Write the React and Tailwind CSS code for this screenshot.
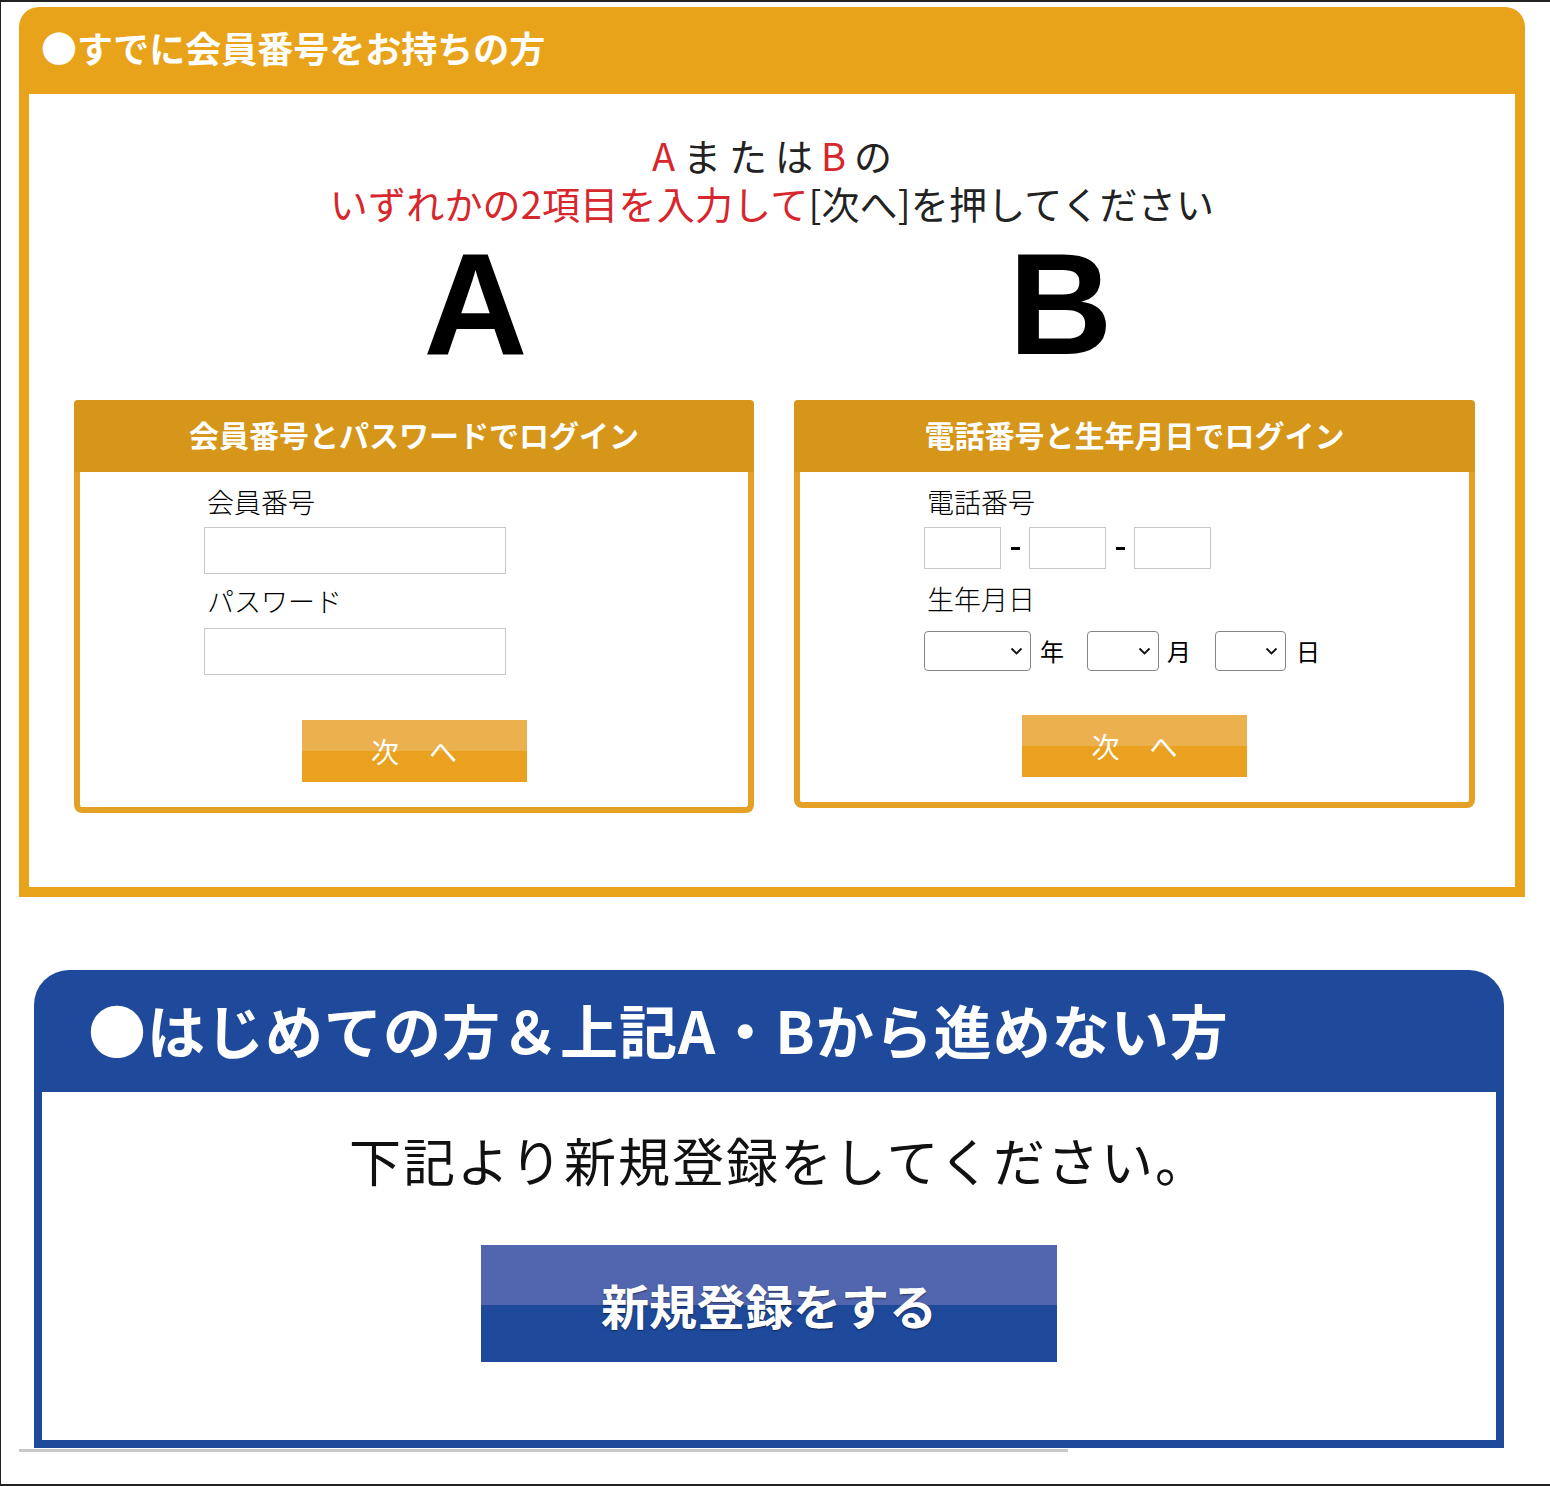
import React from "react";

function Sel({ className }) {
  return (
    <div className={"relative h-[40px] " + className}>
      <select className="block w-full h-full appearance-none border border-[#858585] rounded-[4px] bg-white" />
      <svg
        className="absolute right-[8px] top-[16px] pointer-events-none"
        width="13"
        height="8"
        viewBox="0 0 13 8"
      >
        <path d="M1.5 1.5 L6.5 6.5 L11.5 1.5" stroke="#111" strokeWidth="1.8" fill="none" />
      </svg>
    </div>
  );
}

function NextButton() {
  return (
    <button
      type="button"
      className="mx-auto flex h-[62px] w-[225px] items-center justify-center gap-[30px] bg-[linear-gradient(#ecb14f_50%,#e9a11f_50%)] text-[28px] leading-none text-white"
    >
      <span>次</span>
      <span>へ</span>
    </button>
  );
}

function BoxHeader({ children }) {
  return (
    <div className="flex h-[72px] items-center justify-center rounded-t-[4px] bg-[#d5961a] pb-[5px] text-[30px] font-bold leading-none text-white">
      {children}
    </div>
  );
}

function Dash() {
  return (
    <span className="flex w-[28px] justify-center">
      <span className="block h-[3px] w-[9px] bg-black" />
    </span>
  );
}

export default function App() {
  return (
    <div className="h-[1486px] w-[1550px] overflow-hidden border-b-2 border-l border-t-2 border-[#222] bg-white pl-[18px] pt-[5px] font-['Noto_Sans_CJK_JP','Noto_Sans',sans-serif] text-black">
      {/* Orange section */}
      <section className="w-[1506px]">
        <div className="flex h-[87px] items-center rounded-t-[20px] bg-[#e9a31b] pb-[8px] pl-[22px] text-[36px] font-bold leading-none text-white">
          ●すでに会員番号をお持ちの方
        </div>
        <div className="h-[803px] border-x-[10px] border-b-[10px] border-[#e9a31b] bg-white pt-[37px]">
          <p className="pl-[8px] text-center text-[38px] leading-[48px] tracking-[8px] text-[#222]">
            <span className="text-[#d7262c]">A</span>または<span className="text-[#d7262c]">B</span>の
          </p>
          <p className="text-center text-[38px] leading-[48px] tracking-[0.2px] text-[#222]">
            <span className="text-[#d7262c]">いずれかの2項目を入力して</span>[次へ]を押してください
          </p>
          <div className="mt-[6px] flex justify-center gap-[385px] pr-[8px] font-['Liberation_Sans',Arial,sans-serif] text-[144px] font-bold leading-none">
            <span className="w-[200px] text-center">A</span>
            <span className="w-[200px] text-center">B</span>
          </div>

          <div className="ml-[45px] mt-[23px] flex items-start gap-[40px]">
            {/* Box A */}
            <div className="w-[680px]">
              <BoxHeader>会員番号とパスワードでログイン</BoxHeader>
              <div className="rounded-b-[8px] border-x-[6px] border-b-[6px] border-[#e4a126] bg-white pb-[25px] pt-[12px]">
                <div className="pl-[124px]">
                  <div className="ml-[3px] h-[36px] text-[27px] font-light leading-[36px]">会員番号</div>
                  <input className="mt-[7px] block h-[47px] w-[302px] border border-[#c8c8c8] bg-white" />
                  <div className="ml-[3px] mt-[9px] h-[36px] text-[27px] font-light leading-[36px]">パスワード</div>
                  <input type="password" className="mt-[9px] block h-[47px] w-[302px] border border-[#c8c8c8] bg-white" />
                </div>
                <div className="mt-[45px]">
                  <NextButton />
                </div>
              </div>
            </div>

            {/* Box B */}
            <div className="w-[681px]">
              <BoxHeader>電話番号と生年月日でログイン</BoxHeader>
              <div className="rounded-b-[8px] border-x-[6px] border-b-[6px] border-[#e4a126] bg-white pb-[25px] pt-[12px]">
                <div className="pl-[124px]">
                  <div className="ml-[3px] h-[36px] text-[27px] font-light leading-[36px]">電話番号</div>
                  <div className="mt-[7px] flex h-[42px] items-center">
                    <input className="block h-[42px] w-[77px] border border-[#c8c8c8] bg-white" />
                    <Dash />
                    <input className="block h-[42px] w-[77px] border border-[#c8c8c8] bg-white" />
                    <Dash />
                    <input className="block h-[42px] w-[77px] border border-[#c8c8c8] bg-white" />
                  </div>
                  <div className="ml-[3px] mt-[12px] h-[36px] text-[27px] font-light leading-[36px]">生年月日</div>
                  <div className="mt-[14px] flex h-[40px] items-center text-[24px] leading-none">
                    <Sel className="w-[107px]" />
                    <span className="ml-[9px] w-[47px]">年</span>
                    <Sel className="w-[72px]" />
                    <span className="ml-[8px] w-[48px]">月</span>
                    <Sel className="w-[71px]" />
                    <span className="ml-[10px]">日</span>
                  </div>
                </div>
                <div className="mt-[44px]">
                  <NextButton />
                </div>
              </div>
            </div>
          </div>
        </div>
      </section>

      {/* Blue section */}
      <section className="ml-[15px] mt-[73px] w-[1470px]">
        <div className="flex h-[122px] items-center rounded-t-[35px] bg-[#1f4a9c] pb-[4px] pl-[54px] text-[58px] font-bold leading-none tracking-[1px] text-white">
          ●はじめての方＆上記A・Bから進めない方
        </div>
        <div className="h-[356px] border-x-[8px] border-b-[8px] border-[#1f4a9c] bg-white pt-[34px]">
          <p className="h-[68px] pl-[20px] text-center text-[52px] leading-[68px] tracking-[2px] text-[#111]">
            下記より新規登録をしてください。
          </p>
          <button
            type="button"
            className="mx-auto mt-[51px] flex h-[117px] w-[576px] items-center justify-center bg-[linear-gradient(#5266b0_51%,#1f4a9c_51%)] text-[48px] font-bold leading-none text-white [text-shadow:0_1px_2px_rgba(0,0,0,0.5)]"
          >
            新規登録をする
          </button>
        </div>
      </section>
      <div className="mt-px h-[3px] w-[1049px] bg-[#c8c8c8]" />
    </div>
  );
}
